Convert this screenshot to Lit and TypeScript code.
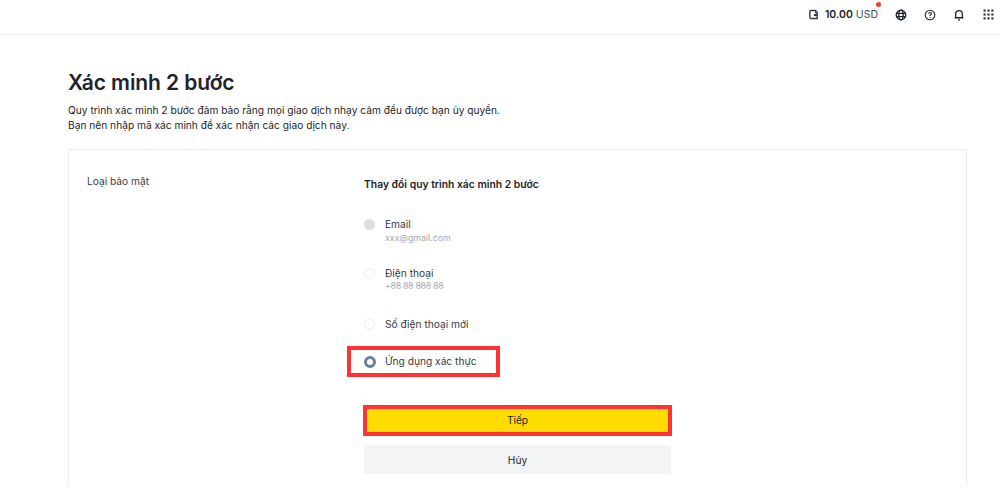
import { LitElement, html, css } from "lit";
import { customElement } from "lit/decorators.js";

@customElement("app-root")
export class AppRoot extends LitElement {
  static styles = css`
    :host { display: block; width: 1000px; height: 492px; overflow: hidden; background: #fff; font-family: Inter, "Noto Sans", sans-serif; color: #1e2329; }
    header { height: 35px; box-sizing: border-box; border-bottom: 1px solid #eaecef; display: flex; align-items: center; justify-content: flex-end; padding: 0 6px 5px 0; }
    .bal { display: flex; align-items: center; font-size: 10.5px; position: relative; margin-right: 17px; }
    .bal svg { margin-right: 6px; }
    .bal b { font-weight: 600; margin-right: 3px; }
    .bal span { color: #474d57; }
    .dot { position: absolute; right: -3px; top: -6px; width: 5px; height: 5px; border-radius: 50%; background: #ef3b3b; }
    .ico { display: flex; margin-left: 17px; }
    .ico:first-of-type { margin-left: 0; }
    .ico:last-of-type { margin-left: 18px; }
    main { padding: 35px 33px 0 68px; }
    h1 { margin: 0; font-size: 21px; line-height: 26px; font-weight: 600; letter-spacing: -0.1px; }
    .desc { margin: 7px 0 0; font-size: 10.2px; line-height: 15px; color: #1e2329; }
    .card { margin-top: 16px; border: 1px solid #eaecef; border-bottom: none; height: 336px; box-sizing: border-box; padding: 25px 18px 0; display: flex; }
    .lbl { width: 277px; font-size: 10.2px; line-height: 13px; color: #3a4049; flex: none; }
    .form { width: 307px; display: flex; flex-direction: column; }
    .ttl { font-size: 10.35px; font-weight: 600; line-height: 14px; margin-top: 2px; }
    .opt { display: flex; gap: 10px; align-items: flex-start; font-size: 10.2px; line-height: 13px; color: #333a44; position: relative; }
    .rad { width: 11px; height: 11px; border-radius: 50%; box-sizing: border-box; border: 1px solid #eaecef; flex: none; margin-top: 1px; }
    .rad.dis { background: #dcdee1; border: none; }
    .rad.on { border: 3px solid #6a8197; width: 12px; height: 12px; margin: 1px -1px 0 0; }
    .sub { font-size: 8.8px; line-height: 13px; color: #a5abb3; }
    .o1 { margin-top: 27px; }
    .o2 { margin-top: 23px; }
    .o2 .sub { line-height: 12px; letter-spacing: -0.3px; }
    .o3 { margin-top: 26px; }
    .o4 { margin-top: 24px; }
    .hl { position: absolute; left: -17px; top: -9px; width: 153px; height: 31px; box-sizing: border-box; border: 4px solid #ff3333; pointer-events: none; }
    button { display: block; width: 100%; border: none; font: inherit; font-size: 10.2px; font-weight: 400; color: #1e2329; border-radius: 2px; padding: 0; }
    .wrap { position: relative; margin-top: 37px; }
    .next { background: #ffdc00; height: 30px; padding-bottom: 1px; }
    .hl2 { position: absolute; left: -1px; top: 0; width: 309px; height: 31px; box-sizing: border-box; border: 4px solid #ff3333; pointer-events: none; }
    .cancel { background: #f3f4f6; height: 29px; margin-top: 10px; }
  `;

  render() {
    return html`
      <header>
        <div class="bal">
          <svg width="11" height="11" viewBox="0 0 12 12" fill="none" stroke="#333a44" stroke-width="1.500"><path d="M2 3C2 2.200 2.500 1.700 3.300 1.700H8.500V3.500H10V10.300H3.300C2.500 10.300 2 9.800 2 9z"/><path d="M6.500 6.500H10" stroke-width="2.500"/></svg>
          <b>10.00</b><span>USD</span><i class="dot"></i>
        </div>
        <span class="ico"><svg width="12" height="12" viewBox="0 0 12 12" fill="none" stroke="#1e2329" stroke-width="1.300"><circle cx="6" cy="6" r="4.800"/><ellipse cx="6" cy="6" rx="2.200" ry="4.800"/><path d="M1 4.300h10M1 7.700h10"/></svg></span>
        <span class="ico"><svg width="12" height="12" viewBox="0 0 12 12" fill="none" stroke="#1e2329" stroke-width="1.100"><circle cx="6" cy="6" r="4.800"/><path d="M4.600 4.800C4.700 3 7.400 3.200 7.400 4.800 7.400 5.800 6 5.800 6 7M6 8v1"/></svg></span>
        <span class="ico"><svg width="12" height="12" viewBox="0 0 12 12" fill="none" stroke="#1e2329" stroke-width="1.300"><path d="M2.700 8.700V5a3.300 3.300 0 0 1 6.600 0v3.700zM1.500 8.900h9M5 10.800h2"/></svg></span>
        <span class="ico"><svg width="11" height="11" viewBox="0 0 11 11" fill="#333a44"><rect x="0.500" y="0.500" width="2.200" height="2.200"/><rect x="4.400" y="0.500" width="2.200" height="2.200"/><rect x="8.300" y="0.500" width="2.200" height="2.200"/><rect x="0.500" y="4.400" width="2.200" height="2.200"/><rect x="4.400" y="4.400" width="2.200" height="2.200"/><rect x="8.300" y="4.400" width="2.200" height="2.200"/><rect x="0.500" y="8.300" width="2.200" height="2.200"/><rect x="4.400" y="8.300" width="2.200" height="2.200"/><rect x="8.300" y="8.300" width="2.200" height="2.200"/></svg></span>
      </header>
      <main>
        <h1>Xác minh 2 bước</h1>
        <p class="desc">Quy trình xác minh 2 bước đảm bảo rằng mọi giao dịch nhạy cảm đều được bạn ủy quyền.<br />Bạn nên nhập mã xác minh để xác nhận các giao dịch này.</p>
        <section class="card">
          <div class="lbl">Loại bảo mật</div>
          <div class="form">
            <div class="ttl">Thay đổi quy trình xác minh 2 bước</div>
            <div class="opt o1"><span class="rad dis"></span><div>Email<div class="sub">xxx@gmail.com</div></div></div>
            <div class="opt o2"><span class="rad"></span><div>Điện thoại<div class="sub">+88 88 888 88</div></div></div>
            <div class="opt o3"><span class="rad"></span><div>Số điện thoại mới</div></div>
            <div class="opt o4"><span class="rad on"></span><div>Ứng dụng xác thực</div><i class="hl"></i></div>
            <div class="wrap"><button class="next">Tiếp</button><i class="hl2"></i></div>
            <button class="cancel">Hủy</button>
          </div>
        </section>
      </main>
    `;
  }
}
